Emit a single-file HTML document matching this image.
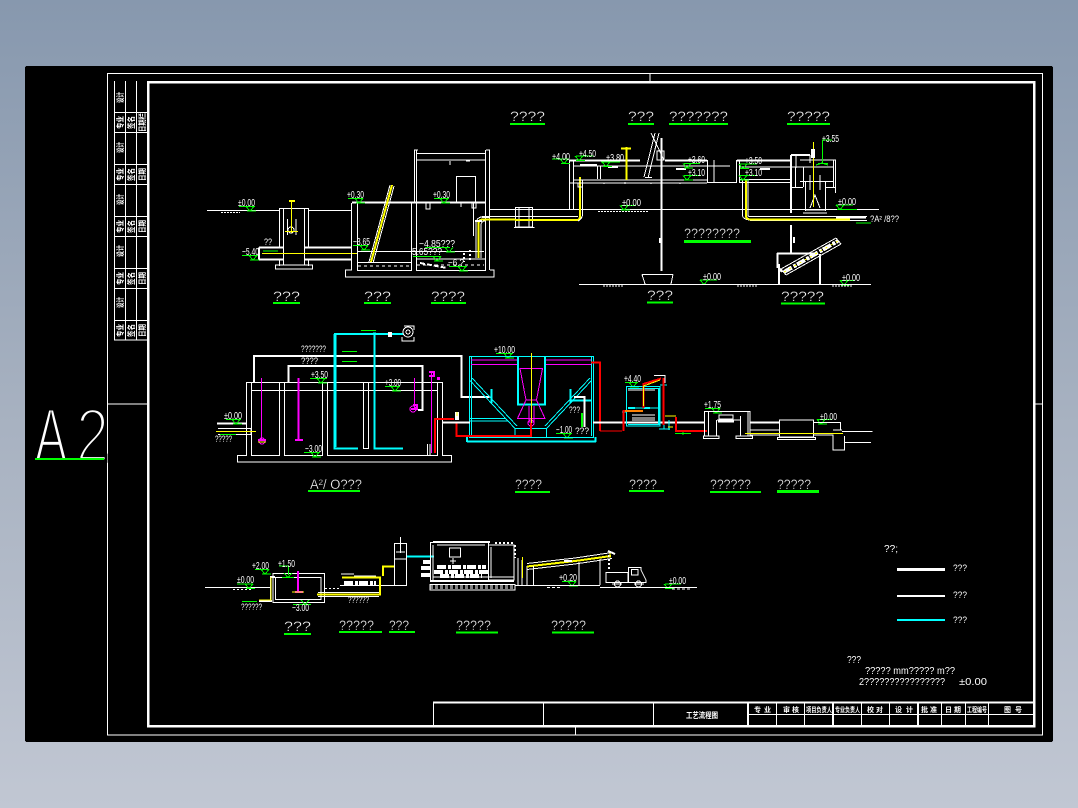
<!DOCTYPE html>
<html><head><meta charset="utf-8"><title>工艺流程图</title>
<style>
html,body{margin:0;padding:0;width:1078px;height:808px;overflow:hidden;background:linear-gradient(180deg,#8798ae 0%,#a8b2c1 53%,#c1c7d3 100%)}
svg{position:absolute;left:0;top:0;display:block}
text{font-family:"Liberation Sans","Noto Sans CJK SC",sans-serif;fill:#fff;stroke:none}
.t{font-size:14px;stroke:#000;stroke-width:.3px}.e{font-size:10px}.s{font-size:9px}.c{font-size:8px;font-weight:700}
.w{fill:none;stroke:#fff;stroke-width:1}.w2{fill:none;stroke:#fff;stroke-width:2}
.g{fill:none;stroke:#0f0;stroke-width:1}.g2{fill:none;stroke:#0f0;stroke-width:2}.g3{fill:none;stroke:#0f0;stroke-width:3}
.y{fill:none;stroke:#ff0;stroke-width:1}.y2{fill:none;stroke:#ff0;stroke-width:2}
.b{fill:none;stroke:#0ff;stroke-width:1}.b2{fill:none;stroke:#0ff;stroke-width:2}
.m{fill:none;stroke:#f0f;stroke-width:1}.m2{fill:none;stroke:#f0f;stroke-width:2}
.r{fill:none;stroke:#f00;stroke-width:1}.r2{fill:none;stroke:#f00;stroke-width:2}
.d{fill:none;stroke:#fff;stroke-width:2;stroke-dasharray:2 2}.d3{fill:none;stroke:#fff;stroke-width:4;stroke-dasharray:9 2 3 1}
</style></head><body>
<svg width="1078" height="808" viewBox="0 0 1078 808" shape-rendering="crispEdges">
<defs><path id="m" d="M-4 0L0 4.5L4 0M-3 4.5H6" fill="none" stroke="#0f0" stroke-width="1"/></defs>
<rect x="25" y="66" width="1028" height="676" rx="2" fill="#000"/>

<!-- frames -->
<path class="w" d="M107.5 735V73.5H1042.5V735ZM650 73.5V81M1035 404H1042.5M575.5 727V735M107.5 404H147M114.5 81V340H147M125.5 81V340M136.5 81V340M114 112.5H147M114 132.5H147M114 164.5H147M114 184.5H147M114 216.5H147M114 236.5H147M114 268.5H147M114 288.5H147M114 320.5H147M114 340H147"/>
<rect x="148" y="82" width="886" height="644" fill="none" stroke="#fff" stroke-width="2.5"/>
<path class="w" d="M433.5 703V726M543.5 703V726M653.5 703V726M776.5 703V726M804.5 703V726M861.5 703V726M889.5 703V726M941.5 703V726M965.5 703V726M988.5 703V726M748 714.5H1034"/>
<path class="w2" d="M433 702.5H1034M748 703V726M833 703V726M918 703V726"/>

<!-- side table text -->
<g>
<text class="c" transform="translate(123,103) rotate(-90)" textLength="11" lengthAdjust="spacingAndGlyphs">设计</text>
<text class="c" transform="translate(123,129) rotate(-90)" textLength="13" lengthAdjust="spacingAndGlyphs">专业</text>
<text class="c" transform="translate(134,129) rotate(-90)" textLength="13" lengthAdjust="spacingAndGlyphs">签名</text>
<text class="c" transform="translate(145,132) rotate(-90)" textLength="19" lengthAdjust="spacingAndGlyphs">日期栏</text>
<text class="c" transform="translate(123,153) rotate(-90)" textLength="11" lengthAdjust="spacingAndGlyphs">设计</text>
<text class="c" transform="translate(123,181) rotate(-90)" textLength="13" lengthAdjust="spacingAndGlyphs">专业</text>
<text class="c" transform="translate(134,181) rotate(-90)" textLength="13" lengthAdjust="spacingAndGlyphs">签名</text>
<text class="c" transform="translate(145,181) rotate(-90)" textLength="13" lengthAdjust="spacingAndGlyphs">日期</text>
<text class="c" transform="translate(123,205) rotate(-90)" textLength="11" lengthAdjust="spacingAndGlyphs">设计</text>
<text class="c" transform="translate(123,233) rotate(-90)" textLength="13" lengthAdjust="spacingAndGlyphs">专业</text>
<text class="c" transform="translate(134,233) rotate(-90)" textLength="13" lengthAdjust="spacingAndGlyphs">签名</text>
<text class="c" transform="translate(145,233) rotate(-90)" textLength="13" lengthAdjust="spacingAndGlyphs">日期</text>
<text class="c" transform="translate(123,257) rotate(-90)" textLength="12" lengthAdjust="spacingAndGlyphs">设计</text>
<text class="c" transform="translate(123,285) rotate(-90)" textLength="13" lengthAdjust="spacingAndGlyphs">专业</text>
<text class="c" transform="translate(134,285) rotate(-90)" textLength="13" lengthAdjust="spacingAndGlyphs">签名</text>
<text class="c" transform="translate(145,285) rotate(-90)" textLength="13" lengthAdjust="spacingAndGlyphs">日期</text>
<text class="c" transform="translate(123,308) rotate(-90)" textLength="11" lengthAdjust="spacingAndGlyphs">设计</text>
<text class="c" transform="translate(123,337) rotate(-90)" textLength="13" lengthAdjust="spacingAndGlyphs">专业</text>
<text class="c" transform="translate(134,337) rotate(-90)" textLength="13" lengthAdjust="spacingAndGlyphs">签名</text>
<text class="c" transform="translate(145,337) rotate(-90)" textLength="13" lengthAdjust="spacingAndGlyphs">日期</text>
</g>

<!-- title block text -->
<text class="c" x="686" y="718" textLength="32" lengthAdjust="spacingAndGlyphs">工艺流程图</text>
<g>
<text class="c" x="754" y="712" textLength="17" lengthAdjust="spacing" style="font-size:7px">专业</text>
<text class="c" x="783" y="712" textLength="16" lengthAdjust="spacing" style="font-size:7px">审核</text>
<text class="c" x="806" y="712" textLength="26" lengthAdjust="spacingAndGlyphs" style="font-size:7px">项目负责人</text>
<text class="c" x="835" y="712" textLength="25" lengthAdjust="spacingAndGlyphs" style="font-size:7px">专业负责人</text>
<text class="c" x="867" y="712" textLength="16" lengthAdjust="spacing" style="font-size:7px">校对</text>
<text class="c" x="895" y="712" textLength="18" lengthAdjust="spacing" style="font-size:7px">设计</text>
<text class="c" x="921" y="712" textLength="16" lengthAdjust="spacing" style="font-size:7px">批准</text>
<text class="c" x="945" y="712" textLength="16" lengthAdjust="spacing" style="font-size:7px">日期</text>
<text class="c" x="967" y="712" textLength="20" lengthAdjust="spacingAndGlyphs" style="font-size:7px">工程编号</text>
<text class="c" x="1004" y="712" textLength="18" lengthAdjust="spacing" style="font-size:7px">图号</text>
</g>

<!-- A2 real text thinned with black stroke -->
<text x="35" y="461" textLength="32" lengthAdjust="spacingAndGlyphs" style="font-size:75px;stroke:#000;stroke-width:2.6px;paint-order:fill">A</text>
<text x="76" y="461" textLength="33" lengthAdjust="spacingAndGlyphs" style="font-size:75px;stroke:#000;stroke-width:3.6px;paint-order:fill">2</text>
<path class="g2" d="M35 459H104"/>

<!-- SECTION 1 LEFT -->
<g>
<path class="w" d="M207 210.5H279M309 210.5H352"/>
<path class="w" stroke-dasharray="2 1" d="M221 212.5H240"/>
<path class="w" d="M279.5 208V247M279.5 259V266M308.5 208V247M308.5 259V266M279 208.5H309M283.5 209V265M304.5 209V265M275.5 265H312.5V269H275.5ZM287.5 219V235M296 219V235"/>
<circle class="w" cx="291" cy="230" r="3"/>
<path class="y" d="M291.5 201V233M285 231.5H298"/>
<path class="y2" d="M289 201H295"/>
<path class="w2" d="M259 247.5V259.5M259 247.5H283M305 247.5H352M259 259.5H283M305 259.5H352"/>
<path class="y" d="M262 253.5H357"/>
<path class="g" d="M263 251H278"/>

<path class="w2" d="M352 202.5H486"/>
<path class="w" d="M351.5 203V270H345.5V277H494V270H490M357.5 203V270.5H411.5V203M416.5 150V270.5H485.5V150M414.5 150V202M414 150H418M486 150H489.5V270M416 153.5H486M416 160H486M473.5 203V236M456.5 202V176.5H475.5V202M357 251.5H484M357 262.5H411.5M416 259H486M450 161V165M466 161H470M426 203V209H430V203M461 203V207M472 203V208H476V203"/>
<path class="w" d="M369 262L390 185M373 263L394 186"/>
<path class="y2" d="M371 262L392 185"/>
<path class="w" stroke-dasharray="3 3" d="M358 266H411M417 265H484"/>
<path class="w2" stroke-dasharray="5 2" d="M420 263L447 268"/>
<path class="d" d="M464 253V262M470 250V262"/>
<path class="w" d="M476 258V224Q476 217 484 216.5H490M481 258V225Q481 221 486 220.5M490 209.5H515M490 216.5H515"/>
<path class="y2" d="M478.5 258V224Q478.5 220 482 219.5H515"/>
<path class="w2" d="M475 221H482M482 217H490"/>

<!-- section-1 elevations -->
<path class="g" d="M239 206.5H255M242 255.5H258M348 198.5H363M434 198.5H449M353 245.5H368M425 247.5H450M413 256.5H441M449 266.5H467"/>
<use href="#m" x="250" y="206.5"/><use href="#m" x="253" y="255.5"/><use href="#m" x="359" y="198.5"/><use href="#m" x="444" y="198.5"/><use href="#m" x="364" y="245.5"/><use href="#m" x="449" y="247.5"/><use href="#m" x="437" y="256.5"/><use href="#m" x="462" y="266.5"/>
<text class="e" x="238" y="206" textLength="17" lengthAdjust="spacingAndGlyphs">±0.00</text>
<text class="e" x="242" y="255" textLength="17" lengthAdjust="spacingAndGlyphs">−5.40</text>
<text class="s" x="264" y="245" textLength="8" lengthAdjust="spacingAndGlyphs">??</text>
<text class="e" x="347" y="198" textLength="17" lengthAdjust="spacingAndGlyphs">+0.30</text>
<text class="e" x="433" y="198" textLength="17" lengthAdjust="spacingAndGlyphs">+0.30</text>
<text class="e" x="353" y="245" textLength="17" lengthAdjust="spacingAndGlyphs">−3.65</text>
<text class="e" x="419" y="247" textLength="36" lengthAdjust="spacingAndGlyphs">−4.85???</text>
<text class="e" x="412" y="255" textLength="30" lengthAdjust="spacingAndGlyphs">5.65???</text>
<text class="e" x="448" y="266" textLength="16" lengthAdjust="spacingAndGlyphs">−6.?</text>

<text class="t" x="273" y="301" textLength="27" lengthAdjust="spacingAndGlyphs">???</text>
<text class="t" x="364" y="301" textLength="27" lengthAdjust="spacingAndGlyphs">???</text>
<text class="t" x="431" y="301" textLength="34" lengthAdjust="spacingAndGlyphs">????</text>
<path class="g2" d="M273 303H300M364 303H391M431 303H466"/>
</g>

<!-- SECTION 1 RIGHT -->
<g>
<path class="w" d="M515.5 207.5H532.5V227H515.5ZM519 207.5V227M529 207.5V227M514 227.5H534.5M532 216.5H578M532 219.5H578"/>
<path class="w" d="M490 209.5H879M515 216.5H532"/>
<path class="y2" d="M515 220H577Q580 220 580 216V177"/>
<path class="w" d="M582.5 180V215Q582 219 578 221M569.5 160V209M573.5 160V209M569 183H707M573 180H707"/>
<path class="w2" d="M569 160.5H640M665 160.5H707M737 160.5H790"/>
<path class="w" d="M573 166H730M707.5 160V182.5H736.5V160M714 160V182M739.5 160V182M739 167H791M739 179.5H791M739 182.5H791M597.5 166V179M600.5 166V179"/>
<path class="w" d="M578 183V187H582M604 183V184M625 182V184M651 183V184M680 183V184"/>
<path class="w2" d="M580 165H597M608 167H618M676 169H686M760 169H770"/>
<path class="y2" d="M626.5 147V180M621 148.5H631"/>
<path class="w" d="M644 177L655 133M648 178L659 133M651 133L664 160M645 177.5H652"/>
<rect class="w" x="657" y="151" width="7" height="9"/>
<path class="w2" d="M661.5 138V271M660 238V243"/>
<path class="w" d="M642 274.5H673M642 274.5L645 284M673 274.5L671 284"/>

<path class="w" d="M742.5 180V216Q743 219 749 220M748 180V216Q749 216.5 750 216.5H867M750 220.5H867"/>
<path class="y2" d="M746 180V216Q746 219 750 219.5H850"/>
<path class="w2" d="M836 217.5H866M791 155V213M791 155H810"/>
<path class="w" d="M796 155V168M810 155V163M791 167H833M795.5 167V187M803.5 167V187M800 181.5H833M791 187.5H803M825 187.5H835.5M833.5 160V187M835.5 160V193M805.5 181V211M825.5 181V211M803 213H827M805 210H826M810 175V190M820 175V190M810 208L815 195L820 208M800 160H836"/>
<path class="y" d="M813.5 142V207"/>
<rect x="811" y="149" width="4" height="9" fill="#fff"/>
<path class="g" d="M822.5 140V163M822 140H832M816 165L822 163L828 165"/>
<path class="g" d="M818 163.5H828"/>

<path class="g" d="M856 223H871M552 159H569M576 156H593M601 162H620M684 163.5H700M684 175.5H701M740 164H757M740 175.5H757M621 205.5H636M836 205H853M700 280H717M840 280.5H855M838 209.5H857"/>
<use href="#m" x="564" y="159"/><use href="#m" x="579" y="156"/><use href="#m" x="606" y="162"/><use href="#m" x="687" y="163.5"/><use href="#m" x="687" y="175.5"/><use href="#m" x="743" y="164"/><use href="#m" x="743" y="175.5"/><use href="#m" x="624" y="205.5"/><use href="#m" x="840" y="205"/><use href="#m" x="704" y="280"/><use href="#m" x="844" y="280.5"/>
<text class="e" x="552" y="160" textLength="18" lengthAdjust="spacingAndGlyphs">+4.00</text>
<text class="e" x="579" y="157" textLength="17" lengthAdjust="spacingAndGlyphs">+4.50</text>
<text class="e" x="606" y="161" textLength="18" lengthAdjust="spacingAndGlyphs">+3.80</text>
<text class="e" x="688" y="163" textLength="17" lengthAdjust="spacingAndGlyphs">+3.60</text>
<text class="e" x="688" y="176" textLength="17" lengthAdjust="spacingAndGlyphs">+3.10</text>
<text class="e" x="745" y="164" textLength="17" lengthAdjust="spacingAndGlyphs">+3.50</text>
<text class="e" x="745" y="176" textLength="17" lengthAdjust="spacingAndGlyphs">+3.10</text>
<text class="e" x="622" y="206" textLength="19" lengthAdjust="spacingAndGlyphs">±0.00</text>
<text class="e" x="838" y="205" textLength="18" lengthAdjust="spacingAndGlyphs">±0.00</text>
<text class="e" x="703" y="280" textLength="18" lengthAdjust="spacingAndGlyphs">±0.00</text>
<text class="e" x="842" y="281" textLength="18" lengthAdjust="spacingAndGlyphs">±0.00</text>
<text class="e" x="822" y="142" textLength="17" lengthAdjust="spacingAndGlyphs">+3.55</text>
<text class="s" x="870" y="222" textLength="29" lengthAdjust="spacingAndGlyphs">?A² /8??</text>

<path class="w" d="M579 284.5H871"/>
<path class="w" stroke-dasharray="2 1" d="M598 211.5H648M603 286H623M737 286H757M832 286H852"/>
<path class="w2" d="M791 225V253M794 237V243M777 253.5H818M777.5 253V268M782 272L777.5 266M779 264V284M820 254V284"/>
<path class="w" d="M781 269L836 238M786 275L841 244M781 269L786 275M836 238L841 244"/>
<path class="d3" d="M784 272L838 241"/>
<path class="y" stroke-dasharray="2 4" d="M784 272L838 241"/>

<text class="t" x="510" y="121" textLength="35" lengthAdjust="spacingAndGlyphs">????</text>
<text class="t" x="628" y="121" textLength="26" lengthAdjust="spacingAndGlyphs">???</text>
<text class="t" x="669" y="121" textLength="59" lengthAdjust="spacingAndGlyphs">???????</text>
<text class="t" x="787" y="121" textLength="43" lengthAdjust="spacingAndGlyphs">?????</text>
<text class="t" x="684" y="238" textLength="56" lengthAdjust="spacingAndGlyphs">????????</text>
<text class="t" x="647" y="300" textLength="26" lengthAdjust="spacingAndGlyphs">???</text>
<text class="t" x="781" y="301" textLength="43" lengthAdjust="spacingAndGlyphs">?????</text>
<path class="g2" d="M510 124H545M628 124H654M669 124H728M787 124H830M647 302.5H673M781 303.5H825"/>
<path class="g3" d="M684 241.5H751"/>
</g>

<!-- SECTION 2 -->
<g>
<path class="w" d="M246.5 382V455.5H237.5V462H451.5V455.5H442.5V382M246 382.5H443M251.5 382V455.5H279.5V382M284.5 382V455.5H322.5V382M327.5 382V455.5H437.5V382M251 390.5H438M363.5 382V448.5H368.5V382M427.5 444V455M430 444V455"/>
<path class="w2" d="M254 382V356H461.5V397H489.5M288.5 382V366H422.5V410H418M217 423.5H246"/>
<path class="w" d="M218 428.5H251M218 434.5H251V428"/>
<path class="y" d="M216 431.5H256"/>
<path class="b2" d="M334.5 334V448.5H358M334 334H403M374.5 334V448.5H403M373 333.5H376"/>
<path class="b" d="M336 334V447"/>
<rect x="388" y="332" width="4" height="5" fill="#fff"/>
<circle class="w" cx="408" cy="332" r="5"/><circle class="w" cx="408" cy="332" r="2"/>
<path class="w" d="M402 337V341H414V337M404 326H414V330"/>
<path class="g" d="M361 330.5H376M342 351.5H357M342 361.5H357M220 434.5H236"/>
<path class="m" d="M261.5 378V440M414.5 378V410M431.5 373V453"/>
<path class="m2" d="M298.5 378V440M429 376H434V372H429M258 440H266M295 440H303M411 409H417V405H413"/>
<circle class="m" cx="262" cy="441" r="3"/><circle class="m" cx="413" cy="409" r="3"/>
<rect x="437" y="377" width="3" height="3" fill="#f0f"/>
<path class="y" d="M258 442H266"/>

<path class="g" d="M310 378.5H327M385 386.5H400M226 419.5H241M304 452.5H320M496 353.5H513M556 433.5H572M625 382.5H638M705 408.5H720M817 419.5H832"/>
<use href="#m" x="321" y="378.5"/><use href="#m" x="395" y="386.5"/><use href="#m" x="236" y="419.5"/><use href="#m" x="315" y="452.5"/><use href="#m" x="508" y="353.5"/><use href="#m" x="567" y="433.5"/><use href="#m" x="633" y="382.5"/><use href="#m" x="716" y="408.5"/><use href="#m" x="821" y="419.5"/>
<text class="s" x="301" y="352" textLength="25" lengthAdjust="spacingAndGlyphs">???????</text>
<text class="s" x="301" y="364" textLength="17" lengthAdjust="spacingAndGlyphs">????</text>
<text class="e" x="311" y="378" textLength="17" lengthAdjust="spacingAndGlyphs">+3.50</text>
<text class="e" x="385" y="386" textLength="16" lengthAdjust="spacingAndGlyphs">+3.00</text>
<text class="e" x="224" y="419" textLength="18" lengthAdjust="spacingAndGlyphs">±0.00</text>
<text class="s" x="215" y="442" textLength="17" lengthAdjust="spacingAndGlyphs">?????</text>
<text class="e" x="305" y="452" textLength="17" lengthAdjust="spacingAndGlyphs">−3.00</text>

<!-- settling tank -->
<path class="b" d="M469.5 356.5H593.5V437.5H469.5ZM471.5 357V436M591.5 357V436M470 380.5L515 428.5H546.5L591.5 380.5M472 378L517 426M590 378L545 426M515 428V437M546.5 428V437M470 418.5H506M470 421H508"/>
<path class="b2" d="M467 441.5H596M467 437V442M595.5 437V442M518 356V404.5H545V356M491.5 389V403M570.5 389V403M570 400.5H592"/>
<path class="m" d="M471 360H517M546 360H591M471 364.5H517M546 364.5H591M520 368.5H542.5L536.5 400H526ZM526 400L517.5 418.5H545L536.5 400M529 406V422H534V406"/>
<circle class="m" cx="531" cy="423" r="3"/>
<path class="y" d="M531.5 353V436"/>
<path class="w2" d="M574 397H584.5V427"/>
<path class="g" d="M581.5 413V427"/><path class="g" d="M582.5 413V427"/>
<text class="s" x="569" y="413" textLength="11" lengthAdjust="spacingAndGlyphs">???</text>
<text class="s" x="575" y="434" textLength="14" lengthAdjust="spacingAndGlyphs">???</text>
<text class="e" x="556" y="433" textLength="16" lengthAdjust="spacingAndGlyphs">−1.00</text>
<text class="e" x="494" y="353" textLength="21" lengthAdjust="spacingAndGlyphs">+10.00</text>
<path class="r2" d="M591 362.5H600V431"/>
<path class="r" d="M600 431H622"/>
<path class="r2" d="M435 453V419H454M456.5 422V436H531V423"/>
<rect x="455" y="412" width="4" height="8" fill="#fff"/>
<path class="y" d="M457 412V416"/>
<path class="w2" d="M443 422.5H470M593 422.5H705"/>

<!-- dosing -->
<path class="b" d="M626.5 386.5H660V426H626.5ZM628 388.5H659V424.5H628M628 408H659M660 385H667M659 429H670M664 420V429M669 420V430M622 412H627"/>
<path class="b2" d="M659 388V424M628 408H635M644 408H650"/>
<path class="w" d="M632 415H655M632 418H655M632 420H655M632 423H655M628 390H655M654 375.5H665V383"/>
<path class="r2" d="M623.5 431V411H643M643.5 408V384L661 378.5M663.5 378V425"/>
<path class="y" d="M625 411H643M643.5 406V386L660 380"/>
<path class="y" d="M665 416H676M668 427H673"/>
<path class="r2" d="M676 417V431H707"/>
<path class="g" d="M675 433.5H691M683 432V435"/>

<path class="w" d="M704.5 412V436M708.5 412V436M703.5 436H719V438.5H703.5ZM704 411.5H750M716.5 420V436M736 436H752.5V438.5H736ZM740.5 416V436M748 411V436M750 411V436M719 415H733V419H719ZM717 420H740"/>
<path class="w2" d="M718 421.5H734"/>
<path class="w" d="M779.5 420V437H813.5V420ZM777.5 437.5H815.5V439.5H777.5ZM750 422.5H779M750 430H779M750 435H779M813 422.5H840.5V430M813 435H833V450H844.5V436M842 431.5H872.5M844 442.5H871M833 430H842"/>
<path class="w2" d="M750 422.5H779"/>
<path class="y" d="M745 433.5H843"/>
<text class="e" x="624" y="382" textLength="17" lengthAdjust="spacingAndGlyphs">+4.40</text>
<text class="e" x="704" y="408" textLength="17" lengthAdjust="spacingAndGlyphs">+1.75</text>
<text class="e" x="820" y="420" textLength="17" lengthAdjust="spacingAndGlyphs">±0.00</text>

<text class="t" x="310" y="489" textLength="52" lengthAdjust="spacingAndGlyphs">A²/ O???</text>
<text class="t" x="515" y="489" textLength="27" lengthAdjust="spacingAndGlyphs">????</text>
<text class="t" x="629" y="489" textLength="28" lengthAdjust="spacingAndGlyphs">????</text>
<text class="t" x="710" y="489" textLength="41" lengthAdjust="spacingAndGlyphs">??????</text>
<text class="t" x="777" y="489" textLength="34" lengthAdjust="spacingAndGlyphs">?????</text>
<path class="g2" d="M308 491H360M515 492H550M629 491H664M710 492H761"/>
<path class="g3" d="M777 491.5H819"/>
</g>

<!-- SECTION 3 -->
<g>
<path class="w" d="M205 587.5H270M273 573.5H324.5V602.5H273ZM275.5 577.5H321V599.5H275.5ZM270.5 577V600.5M340 585.5H394M394.5 543.5H406.5V585.5H394.5ZM394.5 559H406.5M400.5 537V553M396 552H405"/>
<path class="w" stroke-dasharray="2 2" d="M233 589.5H252M325 588.5H340"/>
<path class="w2" d="M270 577H275M259 601H272"/>
<path class="y" d="M271 577V600H259"/>
<path class="m2" d="M298 571V592M295 592H303"/>
<path class="y" d="M292 592H304"/>
<path class="g" d="M237 584H253M255 569.5H269M279 566H289M288.5 566V575M242 601.5H257M293 604.5H308M282 577.5H292M562 581.5H576M665 584H681"/>
<use href="#m" x="249" y="584"/><use href="#m" x="265" y="569.5"/><use href="#m" x="288" y="573"/><use href="#m" x="305" y="600"/><use href="#m" x="572" y="581.5"/><use href="#m" x="668" y="584"/>
<text class="e" x="237" y="583" textLength="17" lengthAdjust="spacingAndGlyphs">±0.00</text>
<text class="e" x="252" y="569" textLength="17" lengthAdjust="spacingAndGlyphs">+2.00</text>
<text class="e" x="278" y="567" textLength="17" lengthAdjust="spacingAndGlyphs">+1.50</text>
<text class="s" x="241" y="610" textLength="21" lengthAdjust="spacingAndGlyphs">??????</text>
<text class="e" x="292" y="611" textLength="17" lengthAdjust="spacingAndGlyphs">−3.00</text>
<text class="s" x="348" y="603" textLength="21" lengthAdjust="spacingAndGlyphs">??????</text>
<path class="y2" d="M317 594.5H380V577.5H342M383 576V566.5H394"/>
<path class="w" d="M318 592.5H379M318 596.5H379"/>
<path class="w" d="M341 574H354M354 576H376"/>
<path class="d3" d="M344 583H376"/>
<path class="b2" d="M407 556.5H434"/>

<!-- press machine -->
<path class="w" d="M430.5 542.5H488.5V581.5H430.5ZM433 545V580M437 545H485M449.5 548H460.5V557H449.5ZM488.5 545H514V580H488.5ZM491 547V578M433 577H514M430 584.5H515V590H430ZM518 558V585M522 560V585M527 566V585"/>
<path class="w2" d="M433 542H490M430 581H514"/>
<path class="d3" d="M423 562H431M421 568H432M421 575H431M437 567H486M434 572H488M440 576H482"/>
<path class="w" d="M450 561H456M453 558V564"/>
<path class="w" stroke-dasharray="3 2" d="M430 586H515M430 588H515"/>
<path class="d" d="M495 543H514M515 545V558"/>
<path class="y" d="M522.5 557V578"/>
<path class="y2" d="M527 566.5L575 561L611 556"/>
<path class="w" d="M527 563.5L575 558L612 552.5M527 569.5L575 564L612 558.5M533.5 566V585M579 562V585M600 559V585M515 585.5H600M600 587.5H697"/>
<path class="w2" d="M564 561H572M608 551L615 554"/>
<path class="d" d="M609 555V570"/>
<path class="y" d="M610 553V558"/>
<rect class="w" x="606" y="572.5" width="22" height="10"/>
<path class="w" d="M628.5 567.5H641V570L646 580V582.5H628.5ZM631.5 569.5H638V575H631.5ZM612 584H622M634 584H644"/>
<circle class="w" cx="617.5" cy="584" r="3"/><circle class="w" cx="638.5" cy="584" r="3"/>
<path class="w" stroke-dasharray="3 2" d="M547 587.5H562M672 589H690"/>
<text class="e" x="559" y="581" textLength="18" lengthAdjust="spacingAndGlyphs">+0.20</text>
<text class="e" x="669" y="584" textLength="17" lengthAdjust="spacingAndGlyphs">±0.00</text>

<text class="t" x="284" y="631" textLength="27" lengthAdjust="spacingAndGlyphs">???</text>
<text class="t" x="339" y="630" textLength="35" lengthAdjust="spacingAndGlyphs">?????</text>
<text class="t" x="389" y="630" textLength="20" lengthAdjust="spacingAndGlyphs">???</text>
<text class="t" x="456" y="630" textLength="35" lengthAdjust="spacingAndGlyphs">?????</text>
<text class="t" x="551" y="630" textLength="35" lengthAdjust="spacingAndGlyphs">?????</text>
<path class="g2" d="M284 634H311M339 632H382M389 632H415M456 632.5H498M552 632.5H594"/>
</g>

<!-- legend -->
<text class="e" x="884" y="552" textLength="14" lengthAdjust="spacingAndGlyphs">??;</text>
<path d="M897 569.5H945" stroke="#fff" stroke-width="3" fill="none"/>
<path class="w2" d="M897 596H945"/>
<path class="b2" d="M897 620H945"/>
<text class="s" x="953" y="571" textLength="14" lengthAdjust="spacingAndGlyphs">???</text>
<text class="s" x="953" y="598" textLength="14" lengthAdjust="spacingAndGlyphs">???</text>
<text class="s" x="953" y="623" textLength="14" lengthAdjust="spacingAndGlyphs">???</text>

<!-- notes -->
<text class="e" x="847" y="663" textLength="14" lengthAdjust="spacingAndGlyphs">???</text>
<text class="e" x="865" y="674" textLength="90" lengthAdjust="spacingAndGlyphs">????? mm????? m??</text>
<text class="e" x="859" y="685" textLength="86" lengthAdjust="spacingAndGlyphs">2????????????????</text>
<text class="e" x="959" y="685" textLength="28" lengthAdjust="spacingAndGlyphs">±0.00</text>
</svg>
</body></html>
